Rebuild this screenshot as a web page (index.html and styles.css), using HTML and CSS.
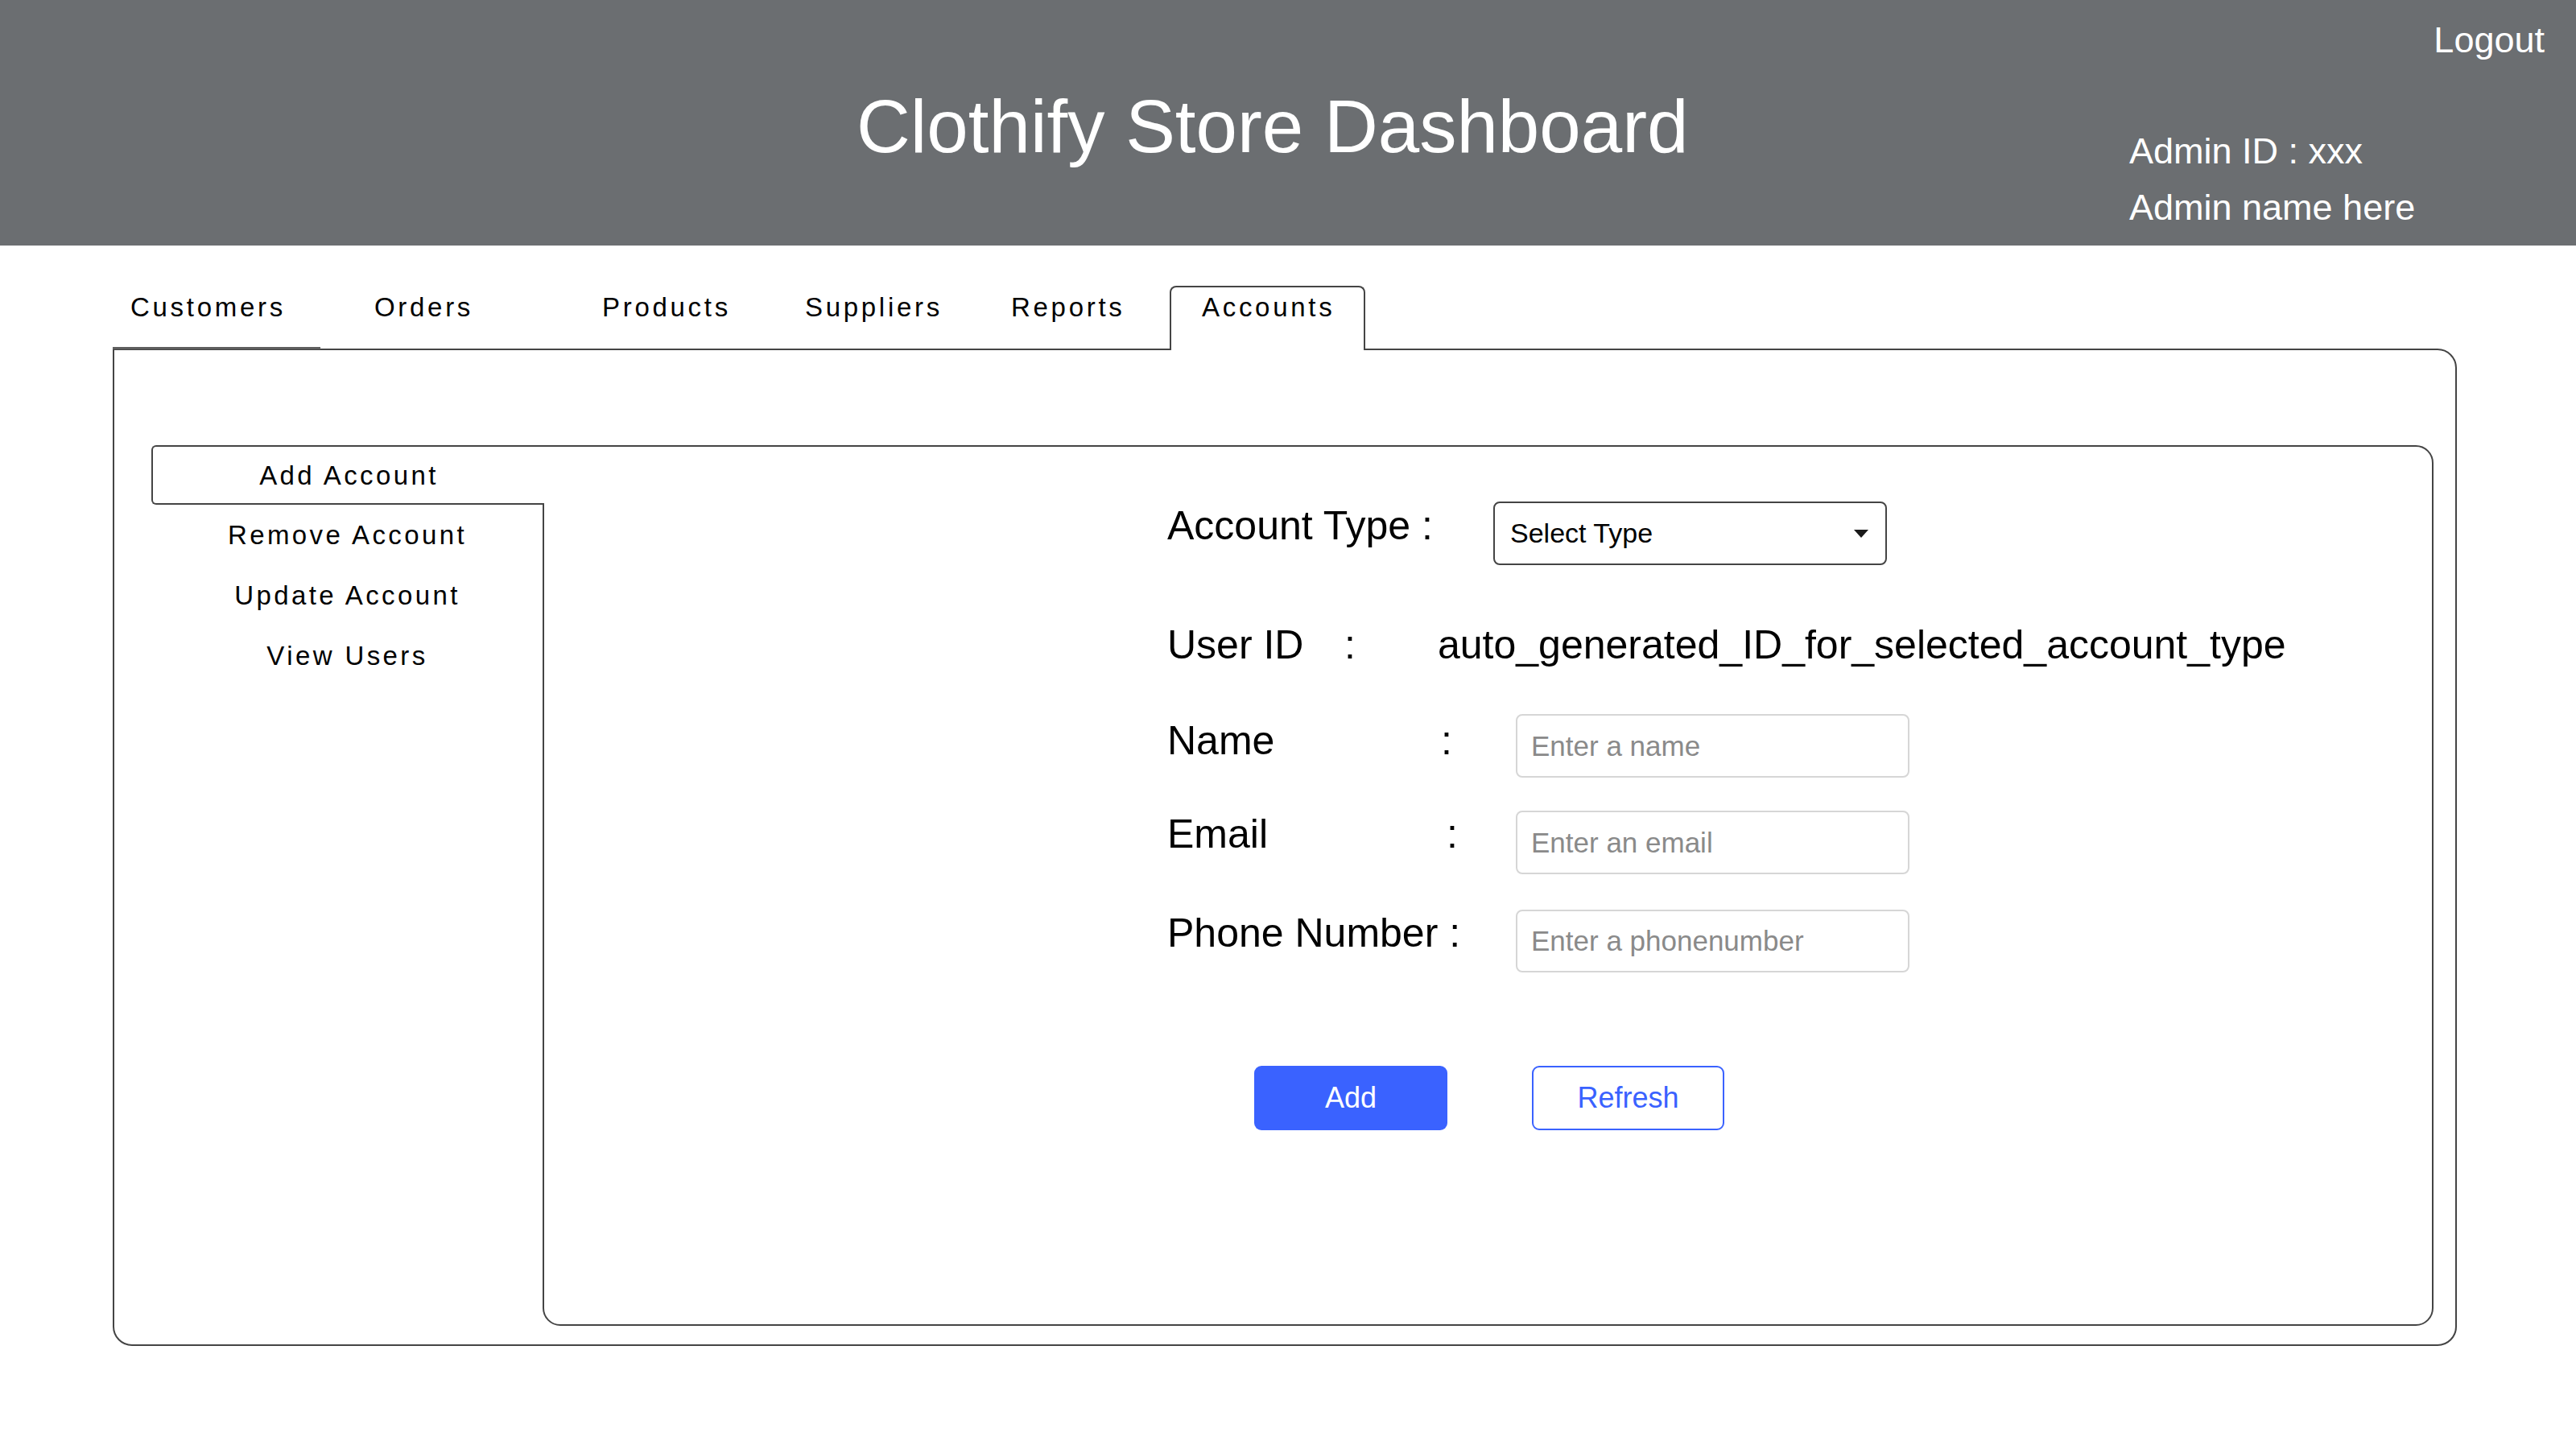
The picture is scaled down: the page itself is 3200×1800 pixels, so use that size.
FILE: index.html
```html
<!DOCTYPE html>
<html lang="en">
<head>
<meta charset="utf-8">
<title>Clothify Store Dashboard</title>
<link rel="stylesheet" href="styles.css">
</head>
<body>
<header class="topbar">
  <h1 class="title">Clothify Store Dashboard</h1>
  <div class="admin">
    <a class="logout">Logout</a>
    <div class="admin-info">
      <div>Admin ID : xxx</div>
      <div>Admin name here</div>
    </div>
  </div>
</header>

<nav class="tabs">
  <div class="tab tab-customers">Customers</div>
  <div class="tab">Orders</div>
  <div class="tab">Products</div>
  <div class="tab">Suppliers</div>
  <div class="tab">Reports</div>
  <div class="tab tab-active">Accounts</div>
</nav>

<section class="panel">
  <div class="inner">
    <ul class="vtabs">
      <li class="vtab vtab-active">Add Account</li>
      <li class="vtab">Remove Account</li>
      <li class="vtab">Update Account</li>
      <li class="vtab">View Users</li>
    </ul>
    <div class="content">
      <form class="form">
        <div class="row row-type">
          <span class="label label-type">Account Type :</span>
          <div class="select">
            <span>Select Type</span>
            <svg class="caret" width="18" height="10" viewBox="0 0 18 10"><polygon points="0,0 18,0 9,10" fill="#1a1a1a"/></svg>
          </div>
        </div>
        <div class="row row-id">
          <span class="label label-id">User ID</span>
          <span class="label colon colon-id">:</span>
          <span class="value">auto_generated_ID_for_selected_account_type</span>
        </div>
        <div class="row row-name">
          <span class="label label-name">Name</span>
          <span class="label colon colon-name">:</span>
          <input class="field" type="text" placeholder="Enter a name">
        </div>
        <div class="row row-email">
          <span class="label label-email">Email</span>
          <span class="label colon colon-email">:</span>
          <input class="field" type="text" placeholder="Enter an email">
        </div>
        <div class="row row-phone">
          <span class="label label-phone">Phone Number :</span>
          <input class="field field-phone" type="text" placeholder="Enter a phonenumber">
        </div>
        <div class="actions">
          <button type="button" class="btn btn-primary">Add</button>
          <button type="button" class="btn btn-outline">Refresh</button>
        </div>
      </form>
    </div>
  </div>
</section>
</body>
</html>
```

FILE: styles.css
```css
* { box-sizing: border-box; }

body {
  margin: 0;
  font-family: "Liberation Sans", Arial, sans-serif;
  background: #ffffff;
  color: #000000;
}

/* Header */
.topbar {
  height: 305px;
  background: #6b6e71;
  color: #ffffff;
  display: grid;
  grid-template-columns: 1064px 1581px 1fr;
}

.title {
  grid-column: 2;
  margin: 111px 0 0 0;
  font-size: 92.5px;
  line-height: 93px;
  font-weight: normal;
  white-space: nowrap;
}

.admin {
  grid-column: 3;
  display: flex;
  flex-direction: column;
  padding-right: 39px;
}

.logout {
  align-self: flex-end;
  margin-top: 27px;
  font-size: 45px;
  line-height: 45px;
  color: #ffffff;
}

.admin-info {
  margin-top: 81px;
  font-size: 45px;
  line-height: 70px;
}

/* Top tabs */
.tabs {
  display: grid;
  grid-template-columns: 303px 283px 252px 256px 219px 243px;
  align-items: end;
  margin: 50px 0 0 140px;
}

.tab {
  height: 78px;
  padding: 10px 0 0 22px;
  font-size: 33px;
  line-height: 33px;
  letter-spacing: 3.7px;
  white-space: nowrap;
}

.tab-customers {
  position: relative;
}

.tab-customers::after {
  content: "";
  position: absolute;
  left: 0;
  bottom: -1px;
  width: 258px;
  height: 3px;
  background: #5f5f5f;
}

.tab-active {
  height: 80px;
  margin-bottom: -2px;
  padding: 8px 0 0 38px;
  border: 2px solid #444444;
  border-bottom: 0;
  border-radius: 8px 8px 0 0;
  background: #ffffff;
  position: relative;
  z-index: 1;
}

/* Outer panel */
.panel {
  margin-left: 140px;
  width: 2912px;
  border: 2px solid #444444;
  border-radius: 0 24px 24px 24px;
  padding: 118px 27px 23px 46px;
}

.inner {
  display: flex;
  height: 1094px;
}

/* Vertical tabs */
.vtabs {
  list-style: none;
  margin: 0;
  padding: 0;
  width: 486px;
  flex-shrink: 0;
}

.vtab {
  height: 75px;
  line-height: 75px;
  text-align: center;
  font-size: 33px;
  letter-spacing: 3.4px;
  padding-left: 1px;
  white-space: nowrap;
}

.vtab-active {
  height: 74px;
  line-height: 68px;
  padding-top: 2px;
  margin-right: -2px;
  border: 2px solid #444444;
  border-right: 0;
  border-radius: 6px 0 0 6px;
  background: #ffffff;
  position: relative;
  z-index: 1;
}

/* Content */
.content {
  flex: 1;
  border: 2px solid #444444;
  border-radius: 0 22px 22px 22px;
  padding: 68px 0 0 774px;
}

.row {
  display: flex;
  align-items: flex-start;
}

.label {
  font-size: 50px;
  line-height: 50px;
  white-space: nowrap;
}

.label-type {
  width: 405px;
  margin-top: 5px;
}

.select {
  width: 489px;
  height: 79px;
  border: 2px solid #444444;
  border-radius: 8px;
  padding: 0 21px 0 19px;
  display: flex;
  align-items: center;
  justify-content: space-between;
  font-size: 34px;
}

.row-id {
  margin-top: 74px;
  align-items: baseline;
}

.label-id { width: 220px; }
.colon-id { width: 116px; }

.value {
  font-size: 50px;
  line-height: 50px;
  white-space: nowrap;
}

.row-name { margin-top: 61px; }
.row-name .label { margin-top: 8px; }
.label-name { width: 340px; }
.colon-name { width: 93px; }

.row-email { margin-top: 41px; }
.row-email .label { margin-top: 4px; }
.label-email { width: 347px; }
.colon-email { width: 86px; }

.row-phone { margin-top: 44px; }
.row-phone .label { margin-top: 4px; }
.label-phone { width: 433px; }

.field {
  width: 489px;
  height: 79px;
  border: 2px solid #d6d6d6;
  border-radius: 8px;
  padding: 0 0 0 17px;
  margin: 0;
  font-family: "Liberation Sans", Arial, sans-serif;
  font-size: 35px;
  color: #000000;
  background: #ffffff;
  outline: none;
}

.field-phone { height: 78px; }

.field::placeholder {
  color: #8a8a8a;
}

.actions {
  display: flex;
  gap: 105px;
  margin-top: 116px;
  padding-left: 108px;
}

.btn {
  width: 240px;
  height: 80px;
  border-radius: 9px;
  font-family: "Liberation Sans", Arial, sans-serif;
  font-size: 36px;
  padding: 0;
  cursor: pointer;
}

.btn-primary {
  background: #3a62ff;
  border: 0;
  color: #ffffff;
}

.btn-outline {
  width: 239px;
  background: #ffffff;
  border: 2px solid #3a62ff;
  color: #3a62ff;
}
```
